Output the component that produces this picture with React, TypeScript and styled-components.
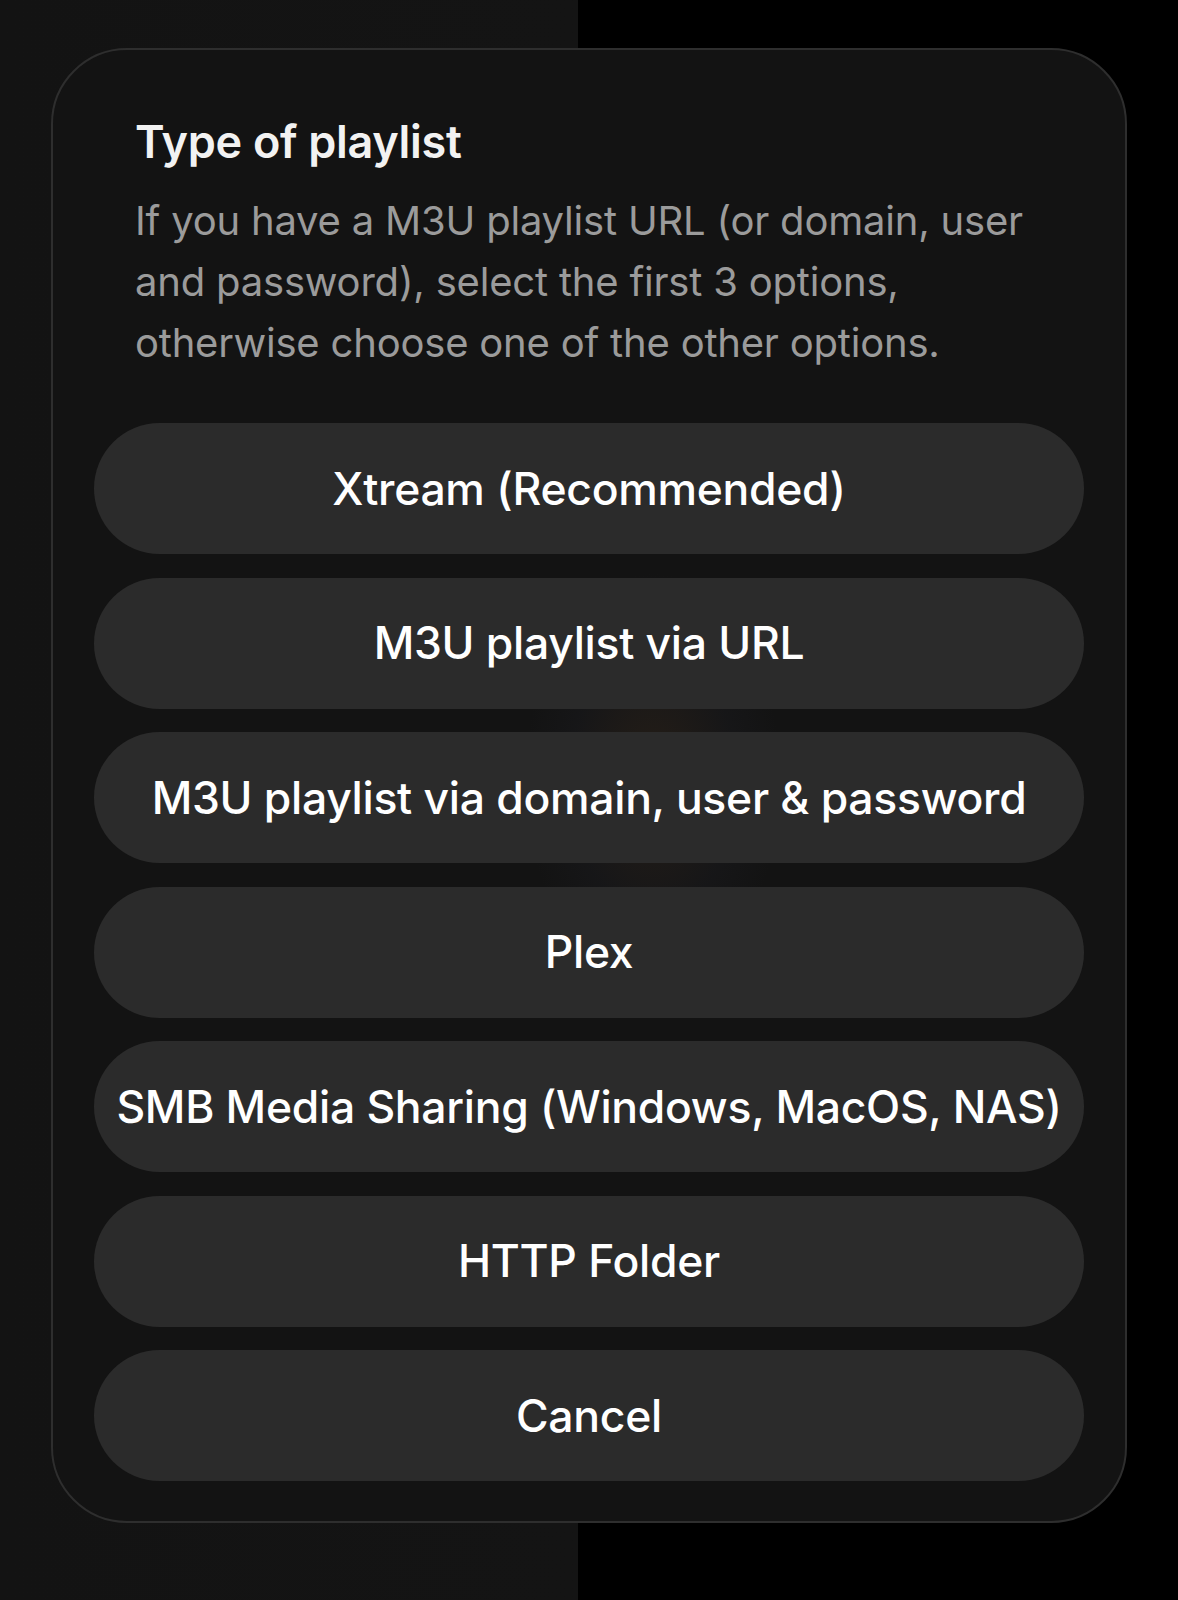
import React from "react";
import styled, { createGlobalStyle } from "styled-components";

const Global = createGlobalStyle`
  html, body {
    margin: 0;
    padding: 0;
    background: #000;
  }
  body {
    font-family: Inter, "Noto Sans", "Liberation Sans", sans-serif;
    -webkit-font-smoothing: antialiased;
  }
`;

const Screen = styled.div`
  width: 1178px;
  min-height: 1600px;
  background: linear-gradient(to right, #131313 0, #141414 578px, #000 578px, #000 100%);
  padding: 48px 0 0 51px;
  box-sizing: border-box;
`;

const Sheet = styled.div`
  width: 1076px;
  box-sizing: border-box;
  background: #131313;
  border: 2px solid #2e2e2e;
  border-radius: 76px;
  padding: 70px 41px 40px 41px;
  display: flex;
  flex-direction: column;
  position: relative;
  overflow: hidden;
`;

const Glow = styled.div`
  position: absolute;
  left: 470px;
  top: 520px;
  width: 260px;
  height: 420px;
  border-radius: 50%;
  background: radial-gradient(ellipse at center, rgba(120, 80, 40, 0.18) 0%, rgba(60, 60, 80, 0.08) 45%, rgba(0, 0, 0, 0) 70%);
  pointer-events: none;
`;

const Header = styled.div`
  padding: 0 0 0 41px;
  display: flex;
  flex-direction: column;
  gap: 26px;
  margin-bottom: 50px;
  position: relative;
`;

const Title = styled.h1`
  margin: 0;
  font-size: 45px;
  line-height: 44px;
  font-weight: 600;
  color: #f2f2f2;
  letter-spacing: -0.3px;
`;

const Description = styled.p`
  margin: 0;
  font-size: 40px;
  line-height: 61px;
  font-weight: 400;
  color: #9b9b9b;
  letter-spacing: -0.2px;
`;

const Options = styled.div`
  display: flex;
  flex-direction: column;
  gap: 23.5px;
  position: relative;
`;

const Option = styled.button`
  height: 131px;
  width: 100%;
  border: none;
  border-radius: 66px;
  background: #2b2b2b;
  color: #ffffff;
  font-family: inherit;
  font-size: 44.5px;
  font-weight: 500;
  letter-spacing: -0.3px;
  display: flex;
  align-items: center;
  justify-content: center;
  padding: 0;
  cursor: pointer;
`;

const options = [
  "Xtream (Recommended)",
  "M3U playlist via URL",
  "M3U playlist via domain, user & password",
  "Plex",
  "SMB Media Sharing (Windows, MacOS, NAS)",
  "HTTP Folder",
  "Cancel",
];

export default function App() {
  return (
    <>
      <Global />
      <Screen>
        <Sheet>
          <Glow />
          <Header>
            <Title>Type of playlist</Title>
            <Description>
              If you have a M3U playlist URL (or domain, user
              <br />
              and password), select the first 3 options,
              <br />
              otherwise choose one of the other options.
            </Description>
          </Header>
          <Options>
            {options.map((o) => (
              <Option key={o}>{o}</Option>
            ))}
          </Options>
        </Sheet>
      </Screen>
    </>
  );
}
